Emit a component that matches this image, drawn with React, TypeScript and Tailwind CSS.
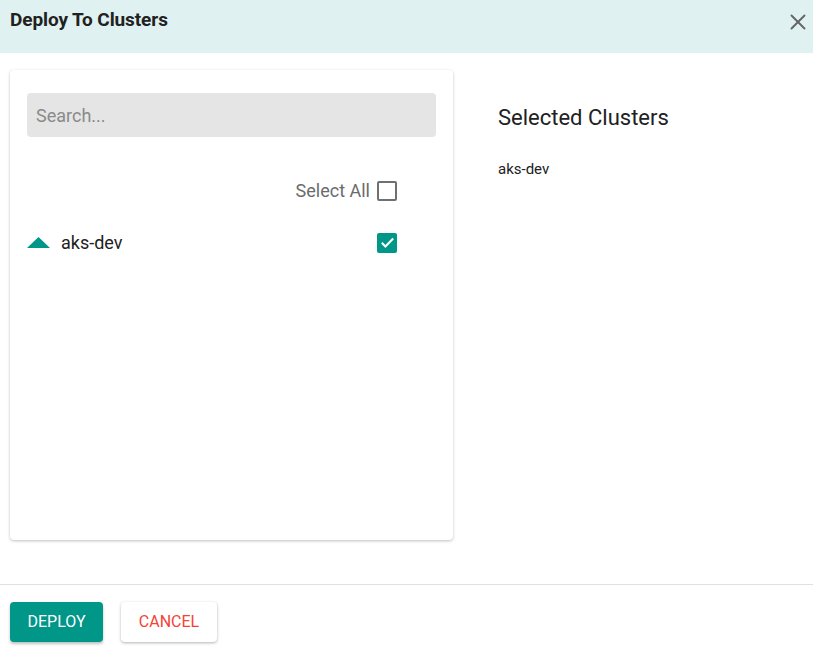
import { X } from "lucide-react";

export default function App() {
  const clusters = ["aks-dev"];

  return (
    <div className="w-[813px] h-[654px] bg-white flex flex-col font-['Roboto',sans-serif] text-[#212121]">
      <div className="h-[53px] bg-[#dff2f1] flex items-start justify-between pl-[10px] pr-[2px]">
        <h1 className="text-[19px] font-bold leading-[22px] mt-[9px] tracking-[-0.1px]">Deploy To Clusters</h1>
        <X className="w-[26px] h-[26px] mt-[9px] text-[#666]" strokeWidth={1.8} />
      </div>

      <div className="flex flex-1 pt-[17px]">
        <div className="ml-[10px] w-[443px] h-[470px] bg-white rounded-[4px] shadow-[0_1px_3px_rgba(0,0,0,0.25)] px-[17px] pt-[23px]">
          <div className="h-[44px] bg-[#e5e5e5] rounded-[4px] flex items-center px-[9px]">
            <input
              placeholder="Search..."
              className="w-full bg-transparent outline-none text-[18px] placeholder-[#8a8a8a]"
            />
          </div>

          <div className="flex items-center justify-end gap-[7px] mt-[40px] pr-[39px]">
            <span className="text-[18px] text-[#6b6b6b]">Select All</span>
            <span className="w-[20px] h-[20px] border-2 border-[#707070] rounded-[2px]" />
          </div>

          {clusters.map((c) => (
            <div key={c} className="flex items-center mt-[25px] pr-[39px]">
              <svg width="23" height="11" viewBox="0 0 23 11" className="mr-[11px]">
                <polygon points="11.5,0 23,11 0,11" fill="#009688" />
              </svg>
              <span className="text-[18px] flex-1">{c}</span>
              <span className="w-[20px] h-[20px] bg-[#009688] rounded-[2px] flex items-center justify-center">
                <svg width="17" height="17" viewBox="0 0 24 24">
                  <path d="M4 12.5l5 5L20 6.5" fill="none" stroke="white" strokeWidth="3" />
                </svg>
              </span>
            </div>
          ))}
        </div>

        <div className="ml-[45px] pt-[34px]">
          <h2 className="text-[22px] leading-[28px]">Selected Clusters</h2>
          <ul className="mt-[26px]">
            {clusters.map((c) => (
              <li key={c} className="text-[15px]">{c}</li>
            ))}
          </ul>
        </div>
      </div>

      <div className="border-t border-[#e0e0e0] h-[70px] flex items-center gap-[18px] px-[10px] pt-[4px]">
        <button className="h-[40px] w-[93px] bg-[#009688] text-white text-[16px] rounded-[4px] shadow-[0_2px_3px_rgba(0,0,0,0.25)]">
          DEPLOY
        </button>
        <button className="h-[40px] w-[96px] bg-white text-[#f44336] text-[16px] rounded-[4px] shadow-[0_1px_3px_rgba(0,0,0,0.3)]">
          CANCEL
        </button>
      </div>
    </div>
  );
}
